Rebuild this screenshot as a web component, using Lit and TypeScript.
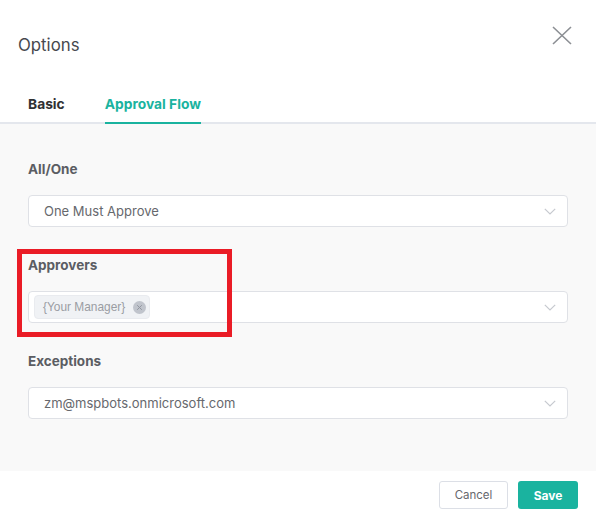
import { LitElement, html, css } from "lit";
import { customElement } from "lit/decorators.js";

const chevron = html`<svg class="chev" width="12" height="7" viewBox="0 0 12 7"><path d="M0.8 0.8 L6 6 L11.2 0.8" fill="none" stroke="#c6c9cf" stroke-width="1.2"/></svg>`;

@customElement("app-root")
export class AppRoot extends LitElement {
  static styles = css`
    :host { display: block; width: 596px; height: 527px; position: relative; background: #fff; font-family: Inter, "Liberation Sans", sans-serif; overflow: hidden; }
    .head { height: 88px; box-sizing: border-box; padding: 35px 18px 0; display: flex; justify-content: space-between; align-items: flex-start; }
    .title { font-size: 16.8px; line-height: 20px; color: #47494e; font-weight: 400; }
    .close { margin: -9px 6px 0 0; display: block; }
    .tabs { height: 36px; box-sizing: border-box; border-bottom: 2px solid #e4e7ed; padding-left: 28px; display: flex; gap: 40px; }
    .tab { font-size: 13.8px; line-height: 17px; font-weight: 700; color: #303133; height: 36px; box-sizing: border-box; padding-top: 8px; }
    .tab.on { color: #1ab39f; border-bottom: 2px solid #1ab39f; }
    .body { height: 347px; background: #f9f9f9; box-sizing: border-box; padding: 37px 28px 0; display: flex; flex-direction: column; gap: 30px; }
    .label { font-size: 13.5px; line-height: 17px; font-weight: 700; color: #5b5d63; margin-bottom: 17px; }
    .select { height: 32px; box-sizing: border-box; width: 540px; border: 1px solid #dfe1e6; border-radius: 4px; background: #fff; display: flex; align-items: center; justify-content: space-between; padding: 0 11px 0 15px; font-size: 13px; color: #66686d; }
    .select.tags { padding-left: 5px; }
    .tag { height: 24px; box-sizing: border-box; background: #f0f2f5; border: 1px solid #e9ebef; border-radius: 4px; display: flex; align-items: center; gap: 8px; padding: 0 3px 0 8px; font-size: 11.9px; color: #9a9da3; font-family: "Liberation Sans", sans-serif; }
    .x { width: 13px; height: 13px; display: block; }
    .foot { height: 56px; display: flex; justify-content: flex-end; padding: 10px 18px 0 0; gap: 10px; align-items: flex-start; box-sizing: border-box; }
    .btn { height: 28px; box-sizing: border-box; border-radius: 3px; display: flex; align-items: center; justify-content: center; }
    .cancel { width: 69px; border: 1px solid #dcdfe6; color: #66686d; background: #fff; font-size: 11.5px; }
    .save { width: 60px; background: #1ab39f; color: #fff; font-weight: 700; font-size: 12px; }
    .mark { position: absolute; left: 17px; top: 249px; width: 215px; height: 88px; box-sizing: border-box; border: 5px solid #ea1c26; }
  `;
  render() {
    return html`
      <div class="head">
        <div class="title">Options</div>
        <svg class="close" width="20" height="19" viewBox="0 0 20 19"><path d="M1 1 L19 18 M19 1 L1 18" stroke="#8c8f94" stroke-width="1.6" fill="none"/></svg>
      </div>
      <div class="tabs"><div class="tab">Basic</div><div class="tab on">Approval Flow</div></div>
      <div class="body">
        <div><div class="label">All/One</div><div class="select">One Must Approve ${chevron}</div></div>
        <div><div class="label">Approvers</div><div class="select tags">
          <div class="tag">{Your Manager}<svg class="x" viewBox="0 0 13 13"><circle cx="6.5" cy="6.5" r="6.5" fill="#c0c4cc"/><path d="M4.2 4.2 L8.8 8.8 M8.8 4.2 L4.2 8.8" stroke="#9196a0" stroke-width="1"/></svg></div>
          ${chevron}</div></div>
        <div><div class="label">Exceptions</div><div class="select">zm@mspbots.onmicrosoft.com ${chevron}</div></div>
      </div>
      <div class="foot"><div class="btn cancel">Cancel</div><div class="btn save">Save</div></div>
      <div class="mark"></div>
    `;
  }
}
